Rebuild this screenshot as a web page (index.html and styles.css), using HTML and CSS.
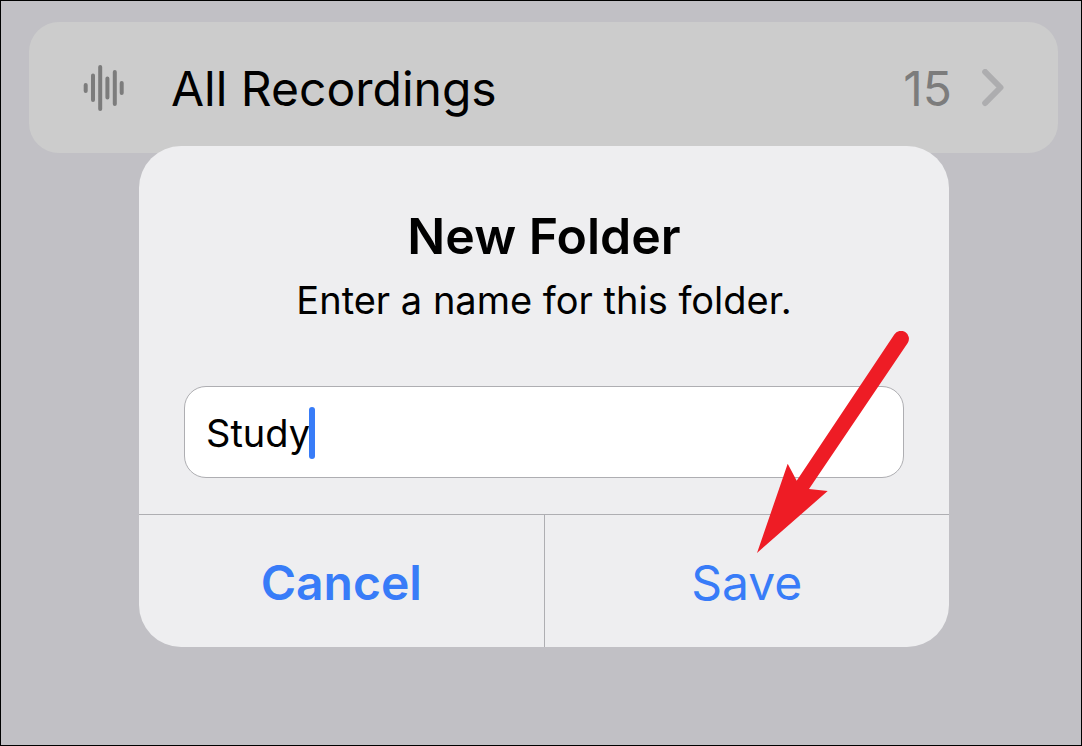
FILE: index.html
```html
<!DOCTYPE html>
<html lang="en">

<head>
  <meta charset="UTF-8">
  <meta name="viewport" content="width=device-width, initial-scale=1.0">
  <title>New Folder</title>
  <link rel="stylesheet" href="styles.css">
</head>

<body>

  <a class="folder-row" href="#">
    <svg class="wave" width="41" height="46" viewBox="0 0 41 46" aria-hidden="true">
      <path d="M2.7 20v6M10 10.5v24.500M17.2 2v42M24.400 13.5v19M31.8 7v32M38.700 18v10" />
    </svg>
    <span class="folder-name">All Recordings</span>
    <span class="folder-count">15</span>
    <svg class="chevron" width="22" height="38" viewBox="0 0 22 38" aria-hidden="true">
      <path d="M3.200 3L18.500 18.500L3.200 34" />
    </svg>
  </a>

  <div class="overlay">
    <form class="dialog" role="dialog" aria-labelledby="title">
      <div class="dialog-body">
        <h1 id="title">New Folder</h1>
        <label for="name">Enter a name for this folder.</label>
        <div class="field">
          <input type="text" id="name" value="Study" autocomplete="off" spellcheck="false">
          <span class="caret"></span>
        </div>
      </div>

      <div class="actions">
        <button type="button" class="cancel">Cancel</button>
        <button type="button" class="save">Save</button>
      </div>

      <svg class="arrow" width="152" height="222" viewBox="0 0 152 222" aria-hidden="true">
        <path d="M0 222L30.7 132.7L39.7 149.7L137.3 3.500A7.700 7.700 0 0 1 150.7 12L52 158L70.7 160Z" />
      </svg>
    </form>
  </div>

</body>

</html>
```

FILE: styles.css
```css
* {
  margin: 0;
  padding: 0;
  box-sizing: border-box;
  font-family: Inter, "Liberation Sans", sans-serif;
}

body {
  position: relative;
  min-height: 100vh;
  padding: 21px 23px 21px 28px;
  background: #c1c0c5;
  border: 1px solid #000;
}

.folder-row {
  display: flex;
  align-items: center;
  padding: 35px 54px;
  background: #cccccc;
  border-radius: 30px;
  color: #000;
  font-size: 48px;
  line-height: 58px;
  text-decoration: none;
}

.wave {
  margin-right: 47px;
  fill: none;
  stroke: #7c7c7c;
  stroke-width: 4;
  stroke-linecap: round;
}

.folder-name,
.folder-count {
  padding-top: 3px;
}

.folder-name {
  flex: 1;
}

.folder-count {
  margin-right: 30px;
  color: #7c7c7c;
}

.chevron {
  fill: none;
  stroke: #adadaf;
  stroke-width: 6;
  stroke-linecap: round;
  stroke-linejoin: round;
}

.overlay {
  position: absolute;
  inset: 0;
  display: flex;
  justify-content: center;
  align-items: flex-start;
  padding: 145px 132px 0 138px;
}

.dialog {
  position: relative;
  width: 100%;
  max-width: 810px;
  background: #eeeef0;
  border-radius: 42px;
}

.dialog-body {
  padding: 60px 45px 36px;
  text-align: center;
}

.dialog h1 {
  font-size: 50px;
  font-weight: 600;
  line-height: 60px;
}

.dialog label {
  display: block;
  margin: 10px 0 62px;
  font-size: 38px;
  line-height: 48px;
}

.field {
  position: relative;
}

.field input {
  display: block;
  width: 100%;
  height: 92px;
  padding: 2px 21px 0;
  background: #fff;
  border: 1px solid #aeaeb2;
  border-radius: 22px;
  outline: none;
  color: #000;
  font-size: 38px;
}

.caret {
  position: absolute;
  top: 21px;
  left: 125px;
  width: 6px;
  height: 52px;
  background: #387cf8;
  border-radius: 3px;
}

.actions {
  display: flex;
  border-top: 1px solid #aeaeb2;
}

.actions button {
  flex: 1;
  height: 132px;
  padding-top: 3px;
  background: transparent;
  border: none;
  color: #387cf8;
  font-size: 48px;
  cursor: pointer;
}

.actions .cancel {
  font-weight: 600;
}

.actions .save {
  border-left: 1px solid #aeaeb2;
}

.arrow {
  position: absolute;
  top: 185px;
  right: 40px;
  fill: #ee1c25;
  pointer-events: none;
}
```
